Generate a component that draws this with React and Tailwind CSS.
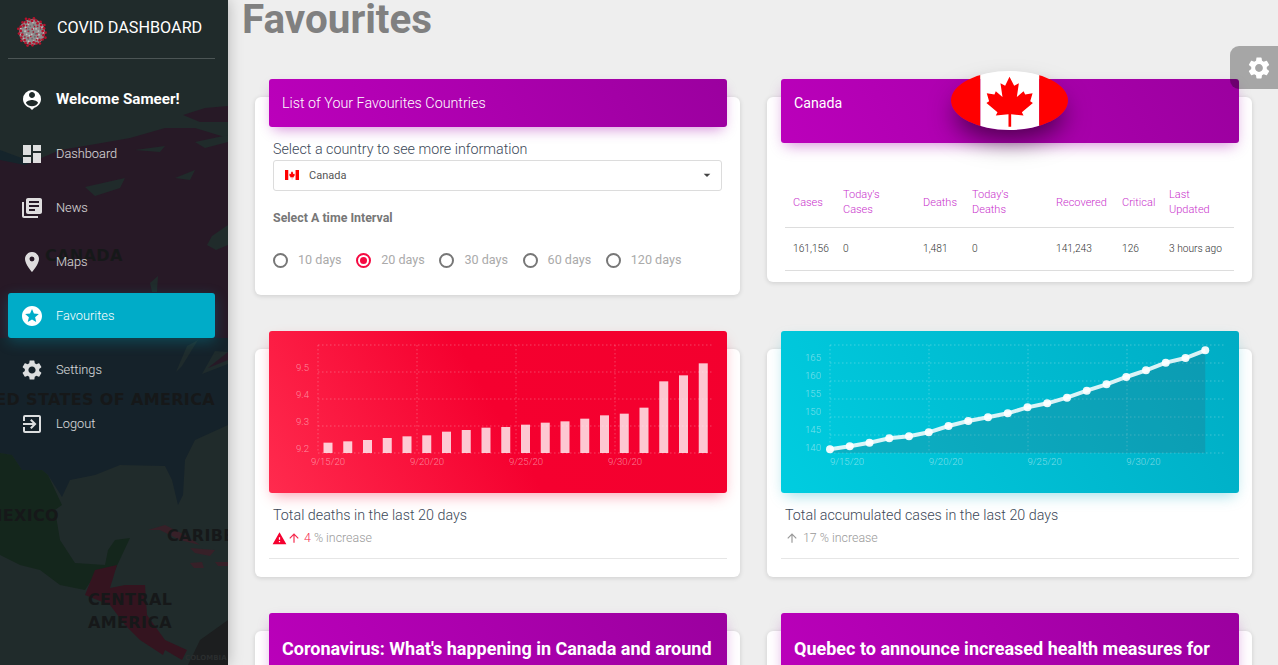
import React from 'react';
import { MdPersonPin, MdDashboard, MdLibraryBooks, MdLocationOn, MdStars, MdSettings, MdExitToApp, MdWarning, MdArrowUpward, MdArrowDropDown } from 'react-icons/md';

function Virus() {
  const reds = [];
  const grays = [];
  for (let i = 0; i < 64; i++) {
    const a = i * 2.39996;
    const r = Math.sqrt((i + 0.5) / 64) * 14.6;
    reds.push([16 + Math.cos(a) * r, 16 + Math.sin(a) * r, r > 10 ? 1.35 : 0.8, i]);
  }
  for (let i = 0; i < 40; i++) {
    const a = i * 1.7;
    const r = Math.sqrt((i + 0.5) / 40) * 12;
    grays.push([16 + Math.cos(a) * r, 16 + Math.sin(a) * r, i % 2 ? '#c4c0c1' : '#6f6a6c']);
  }
  return (
    <svg width="32" height="32" viewBox="0 0 32 32" className="mt-[8px] shrink-0">
      <circle cx="16" cy="16" r="13" fill="#8f8a8c" />
      {grays.map((s, i) => <circle key={i} cx={s[0]} cy={s[1]} r="0.9" fill={s[2]} />)}
      {reds.filter((s) => s[3] % 2 === 0 || s[2] > 1).map((s, i) => <circle key={i} cx={s[0]} cy={s[1]} r={s[2]} fill="#b5122c" />)}
    </svg>
  );
}

function SidebarMap() {
  return (
    <svg width="228" height="665" viewBox="0 0 228 665" className="absolute inset-0">
      <rect width="228" height="665" fill="#202b2b" />
      <path d="M0 150L35 163L0 172Z" fill="#15242b" />
      <path d="M0 160L25 165L60 150L90 145L130 138L165 128L195 128L228 138L228 225L212 236L207 245L216 250L228 245L228 360L210 372L205 365L225 345L195 338L0 338Z" fill="#271926" />
      <path d="M183 115L205 108L228 106L228 122L200 122Z" fill="#271926" />
      <path d="M85 187L125 178L120 188L95 196ZM150 283L158 276L157 292L152 292ZM175 178L195 170L190 180ZM135 150L165 146L160 152ZM195 142L228 135L228 142L205 148Z" fill="#202b2b" />
      <path d="M0 338L228 338L228 425L195 440L185 460L183 495L178 505L172 480L165 466L120 465L95 475L70 480L62 497L48 475L42 470L22 470L12 455L0 453Z" fill="#15222a" />
      <path d="M176 372L187 346L198 340L182 366ZM202 374L228 364L228 352L215 351Z" fill="#1f2b2c" />
      <path d="M208 368L228 352L228 360Z" fill="#271926" />
      <path d="M0 453L12 455L22 470L42 470L48 475L62 505L55 510L60 540L75 563L105 565L108 550L115 540L130 538L115 570L95 575L85 590L60 585L40 570L20 565L0 555Z" fill="#14261c" />
      <path d="M95 570L117 565L110 588L125 585L145 585L147 615L165 640L187 650L182 660L165 650L163 655L140 640L125 625L110 605L85 595Z" fill="#34141f" />
      <path d="M148 530L165 525L185 535L200 545L180 540L160 530ZM190 548L215 550L210 556L195 553ZM190 563L202 562L204 568L194 568ZM215 562L228 562L228 566L218 566Z" fill="#372028" />
      <path d="M188 665L200 640L228 620L228 665Z" fill="#1c1e1f" />
      <g fontFamily="'DejaVu Sans', sans-serif" fontWeight="700" fontSize="16" fill="#161819">
        <text x="45" y="261" letterSpacing="0.35">CANADA</text>
        <text x="215" y="405" textAnchor="end" letterSpacing="0.35">UNITED STATES OF AMERICA</text>
        <text x="59" y="521" textAnchor="end" letterSpacing="0.35">MEXICO</text>
        <text x="167" y="541" letterSpacing="0.35">CARIBBEAN</text>
        <text x="88" y="605" letterSpacing="0.35">CENTRAL</text>
        <text x="88" y="628" letterSpacing="0.35">AMERICA</text>
        <text x="185" y="660" fontSize="7" fill="#2a2d2e">COLOMBIA</text>
      </g>
    </svg>
  );
}

const navItems = [
  { icon: MdDashboard, label: 'Dashboard' },
  { icon: MdLibraryBooks, label: 'News' },
  { icon: MdLocationOn, label: 'Maps' },
  { icon: MdStars, label: 'Favourites', active: true },
  { icon: MdSettings, label: 'Settings' },
  { icon: MdExitToApp, label: 'Logout' },
];

function Sidebar() {
  return (
    <aside className="relative z-10 h-[665px] w-[228px] shrink-0 overflow-hidden shadow-[0_0_14px_rgba(0,0,0,0.25)]">
      <SidebarMap />
      <div className="relative flex h-full flex-col">
        <div className="mr-[13px] ml-2 flex h-[59px] items-center gap-[9px] border-b border-white/20 pb-[3px] pl-2">
          <Virus />
          <span className="text-[16.2px] leading-6 text-white">COVID DASHBOARD</span>
        </div>
        <div className="mt-[18px] flex flex-col gap-[9px]">
          <div className="mr-[13px] ml-2 flex h-[45px] items-center gap-3 px-3 text-white">
            <MdPersonPin size={24} color="#fff" className="shrink-0" />
            <span className="text-[15.2px] font-bold">Welcome Sameer!</span>
          </div>
          {navItems.map((n) => {
            const Icon = n.icon;
            return (
              <div
                key={n.label}
                className={n.active
                  ? 'mr-[13px] ml-2 flex h-[45px] items-center gap-3 rounded-[3px] bg-[#00acc8] px-3 text-white shadow-[0_4px_14px_rgba(0,172,200,0.28)]'
                  : 'mr-[13px] ml-2 flex h-[45px] items-center gap-3 px-3 text-white/85'}
              >
                <Icon size={24} className="shrink-0" />
                <span className="text-[12.8px] font-light">{n.label}</span>
              </div>
            );
          })}
        </div>
      </div>
    </aside>
  );
}

function CanadaFlag({ className }) {
  return (
    <svg viewBox="33 18 350 175" preserveAspectRatio="none" className={className}>
      <rect x="33" y="18" width="88" height="175" fill="#ff0000" />
      <rect x="121" y="18" width="176" height="175" fill="#ffffff" />
      <rect x="297" y="18" width="86" height="175" fill="#ff0000" />
      <path d="M208 35L222 62L236 54L230 95L250 78L255 88L277 84L270 108L278 113L245 140L250 150L213 146L213 183L205 183L205 146L167 150L172 140L139 113L147 108L140 84L163 88L167 78L187 95L181 54L195 62Z" fill="#ff0000" />
    </svg>
  );
}

const HEADER = 'relative mr-[13px] ml-[14px] -mt-[18px] rounded-[3px] bg-[linear-gradient(60deg,#bb00bb,#9b009f)] px-[13px] text-white shadow-[0_6px_14px_-4px_rgba(160,0,170,0.45)]';

function CountryCard() {
  const opts = ['10 days', '20 days', '30 days', '60 days', '120 days'];
  return (
    <section className="rounded-[6px] bg-white shadow-[0_1px_5px_rgba(0,0,0,0.14)]">
      <div className={HEADER + ' flex h-[48px] items-center pt-[1px]'}>
        <h2 className="text-[14.3px] font-light">List of Your Favourites Countries</h2>
      </div>
      <div className="flex h-[168px] flex-col px-[18px] pt-[13px]">
        <p className="text-[14.3px] leading-[18px] font-light text-[#3c4858]">Select a country to see more information</p>
        <div className="mt-[2px] flex h-[31px] items-center rounded-[3px] border border-[#dcdcdc] pr-[6px] pl-[11px]">
          <CanadaFlag className="-mt-[1px] h-[10px] w-[14px]" />
          <span className="ml-[10px] flex-1 pt-[1px] text-[11px] text-[#555]">Canada</span>
          <MdArrowDropDown size={16} color="#444" className="-mt-[2px]" />
        </div>
        <h3 className="mt-[20px] text-[12.4px] leading-[14px] font-bold text-[#777]">Select A time Interval</h3>
        <div className="mt-[26px] flex">
          {opts.map((o, i) => (
            <label key={o} className="flex w-[83.2px] items-center gap-[10px]">
              <span className={i === 1
                ? 'flex h-[15px] w-[15px] items-center justify-center rounded-full border-2 border-[#f50a42]'
                : 'flex h-[15px] w-[15px] items-center justify-center rounded-full border-2 border-[#777]'}>
                {i === 1 && <span className="h-[7px] w-[7px] rounded-full bg-[#f50a42]" />}
              </span>
              <span className="text-[12.6px] text-[#aaa]">{o}</span>
            </label>
          ))}
        </div>
      </div>
    </section>
  );
}

function StatsCard() {
  const cols = [
    ['w-[50px]', 'Cases', '161,156'],
    ['w-[80px]', ["Today's", 'Cases'], '0'],
    ['w-[49px]', 'Deaths', '1,481'],
    ['w-[84px]', ["Today's", 'Deaths'], '0'],
    ['w-[66px]', 'Recovered', '141,243'],
    ['w-[47px]', 'Critical', '126'],
    ['w-[73px]', ['Last', 'Updated'], '3 hours ago'],
  ];
  return (
    <section className="rounded-[6px] bg-white shadow-[0_1px_5px_rgba(0,0,0,0.14)]">
      <div className={HEADER + ' h-[64px] pt-[13px]'}>
        <h2 className="text-[14.2px] leading-[22px]">Canada</h2>
        <div className="absolute top-[-8px] left-[170px] h-[59px] w-[117px] overflow-hidden rounded-[50%] shadow-[0_14px_26px_-4px_rgba(0,0,0,0.55)]">
          <CanadaFlag className="block h-full w-full" />
        </div>
      </div>
      <div className="pt-[33px] pr-[4px] pb-[11px] pl-[18px]">
        <table className="w-[449px] table-fixed border-collapse text-left">
          <thead>
            <tr className="border-b border-[#ddd]">
              {cols.map((c, i) => (
                <th key={i} className={c[0] + ' h-[51px] px-2 pt-[2px] text-[11px] leading-[15px] font-light text-[#c930cc]'}>
                  {Array.isArray(c[1]) ? <>{c[1][0]}<br />{c[1][1]}</> : c[1]}
                </th>
              ))}
            </tr>
          </thead>
          <tbody>
            <tr className="border-b border-[#ddd]">
              {cols.map((c, i) => (
                <td key={i} className="h-[43px] whitespace-nowrap px-2 text-[10.2px] font-light text-[#333]">{c[2]}</td>
              ))}
            </tr>
          </tbody>
        </table>
      </div>
    </section>
  );
}

const LX = [0, 99, 198, 297];

function Grid({ ys, right, x0 }) {
  return (
    <g stroke="rgba(255,255,255,0.25)" strokeWidth="1" strokeDasharray="1.5 2.5" fill="none">
      {ys.map((y) => <line key={y} x1={x0} x2={right} y1={y} y2={y} />)}
      {LX.map((d) => <line key={d} x1={x0 + d} x2={x0 + d} y1={ys[0]} y2={ys[ys.length - 1]} />)}
    </g>
  );
}

function BarChart() {
  const tops = [338, 334, 330, 324, 319, 316, 305, 300, 293, 291, 284, 278, 274, 266, 256, 251, 233, 154, 136, 100];
  const yl = [['9.5', 39.7], ['9.4', 66.7], ['9.3', 93.7], ['9.2', 120.7]];
  return (
    <svg width="458" height="162" viewBox="0 0 458 162" className="block">
      <Grid ys={[14, 41, 68, 95, 122]} right={443} x0={49} />
      {tops.map((t, i) => {
        const y = t / 3 - 1;
        return <rect key={i} x={54.5 + i * 19.75} y={y} width="9" height={122 - y} fill="#ffffff" fillOpacity="0.78" />;
      })}
      <g fill="rgba(255,255,255,0.48)" fontSize="9.6" fontFamily="Roboto, sans-serif" fontWeight="300">
        {yl.map(([t, y]) => <text key={t} x="40" y={y} textAnchor="end">{t}</text>)}
        {['9/15/20', '9/20/20', '9/25/20', '9/30/20'].map((t, i) => <text key={t} x={59 + i * 99} y="134" textAnchor="middle">{t}</text>)}
      </g>
    </svg>
  );
}

function LineChart() {
  const ys = [358, 349, 338, 325, 319, 307, 288, 273, 262, 250, 232, 220, 203, 182, 163, 141, 121, 98, 84, 61];
  const pts = ys.map((y, i) => [49 + i * 19.75, y / 3 - 1]);
  const line = pts.map((p) => p.join(',')).join(' ');
  const area = '49,122 ' + line + ' ' + pts[19][0] + ',122';
  const yl = ['165', '160', '155', '150', '145', '140'];
  return (
    <svg width="458" height="162" viewBox="0 0 458 162" className="block">
      <Grid ys={[14, 32, 50, 68, 86, 104, 122]} right={443} x0={49} />
      <polygon points={area} fill="rgba(60,80,100,0.2)" />
      <polyline points={line} fill="none" stroke="rgba(255,255,255,0.85)" strokeWidth="4" />
      {pts.map((p, i) => <circle key={i} cx={p[0]} cy={p[1]} r="4" fill="#ffffff" fillOpacity="0.92" />)}
      <g fill="rgba(255,255,255,0.48)" fontSize="9.6" fontFamily="Roboto, sans-serif" fontWeight="300">
        {yl.map((t, i) => <text key={t} x="40" y={30.3 + i * 18} textAnchor="end">{t}</text>)}
        {['9/15/20', '9/20/20', '9/25/20', '9/30/20'].map((t, i) => <text key={t} x={66 + i * 98.8} y="134" textAnchor="middle">{t}</text>)}
      </g>
    </svg>
  );
}

function ChartCard({ gradient, chart, title, children }) {
  return (
    <section className="rounded-[6px] bg-white shadow-[0_1px_5px_rgba(0,0,0,0.14)]">
      <div className={'relative mr-[13px] ml-[14px] -mt-[18px] h-[162px] rounded-[3px] ' + gradient}>{chart}</div>
      <div className="mr-[13px] ml-[14px] flex h-[66px] flex-col border-b border-[#e6e6e6] px-1 pt-[13px]">
        <h4 className="text-[14.3px] leading-[18px] font-light text-[#3c4858]">{title}</h4>
        <div className="mt-[6px] flex h-[16px] items-center text-[12.4px] font-light text-[#999]">{children}</div>
      </div>
      <div className="h-[18px]" />
    </section>
  );
}

function NewsCard({ title }) {
  return (
    <section className="rounded-[6px] bg-white shadow-[0_1px_5px_rgba(0,0,0,0.14)]">
      <div className={HEADER + ' pt-[24px] pb-[16px]'}>
        <h2 className="text-[18px] leading-6 font-bold">{title}</h2>
      </div>
      <div className="h-[60px]" />
    </section>
  );
}

export default function App() {
  return (
    <div className="relative flex h-[665px] w-[1278px] overflow-hidden bg-[#eeeeee] font-[Roboto,sans-serif]">
      <Sidebar />
      <main className="min-w-0 flex-1 pl-[14px]">
        <h1 className="-mt-[2px] h-[43px] text-[40.4px] leading-[43px] font-bold text-[#808080]">Favourites</h1>
        <div className="mt-[56px] ml-[13px] grid w-[997px] grid-cols-[485px_485px] items-start gap-x-[27px] gap-y-[54px]">
          <CountryCard />
          <StatsCard />
          <ChartCard
            gradient="bg-[linear-gradient(60deg,#ff2b4e,#f5002f_50%,#f3002e)] shadow-[0_6px_14px_-4px_rgba(245,0,47,0.4)]"
            chart={<BarChart />}
            title="Total deaths in the last 20 days"
          >
            <MdWarning size={15} color="#f5002f" className="-ml-[1px]" />
            <MdArrowUpward size={14} color="#f5284c" />
            <span className="ml-[3px] text-[#f5284c]">4</span>
            <span className="ml-[3px]">% increase</span>
          </ChartCard>
          <ChartCard
            gradient="bg-[linear-gradient(60deg,#00cde0,#00acc4)] shadow-[0_6px_14px_-4px_rgba(0,172,196,0.4)]"
            chart={<LineChart />}
            title="Total accumulated cases in the last 20 days"
          >
            <MdArrowUpward size={14} color="#999" />
            <span className="ml-[4px]">17 % increase</span>
          </ChartCard>
          <NewsCard title="Coronavirus: What's happening in Canada and around the world" />
          <NewsCard title="Quebec to announce increased health measures for Montreal" />
        </div>
      </main>
      <div className="absolute top-[46px] right-0 z-20 flex h-[43px] w-[48px] items-center justify-center rounded-l-[9px] bg-black/30">
        <MdSettings size={26} color="#fff" className="ml-[10px]" />
      </div>
    </div>
  );
}
